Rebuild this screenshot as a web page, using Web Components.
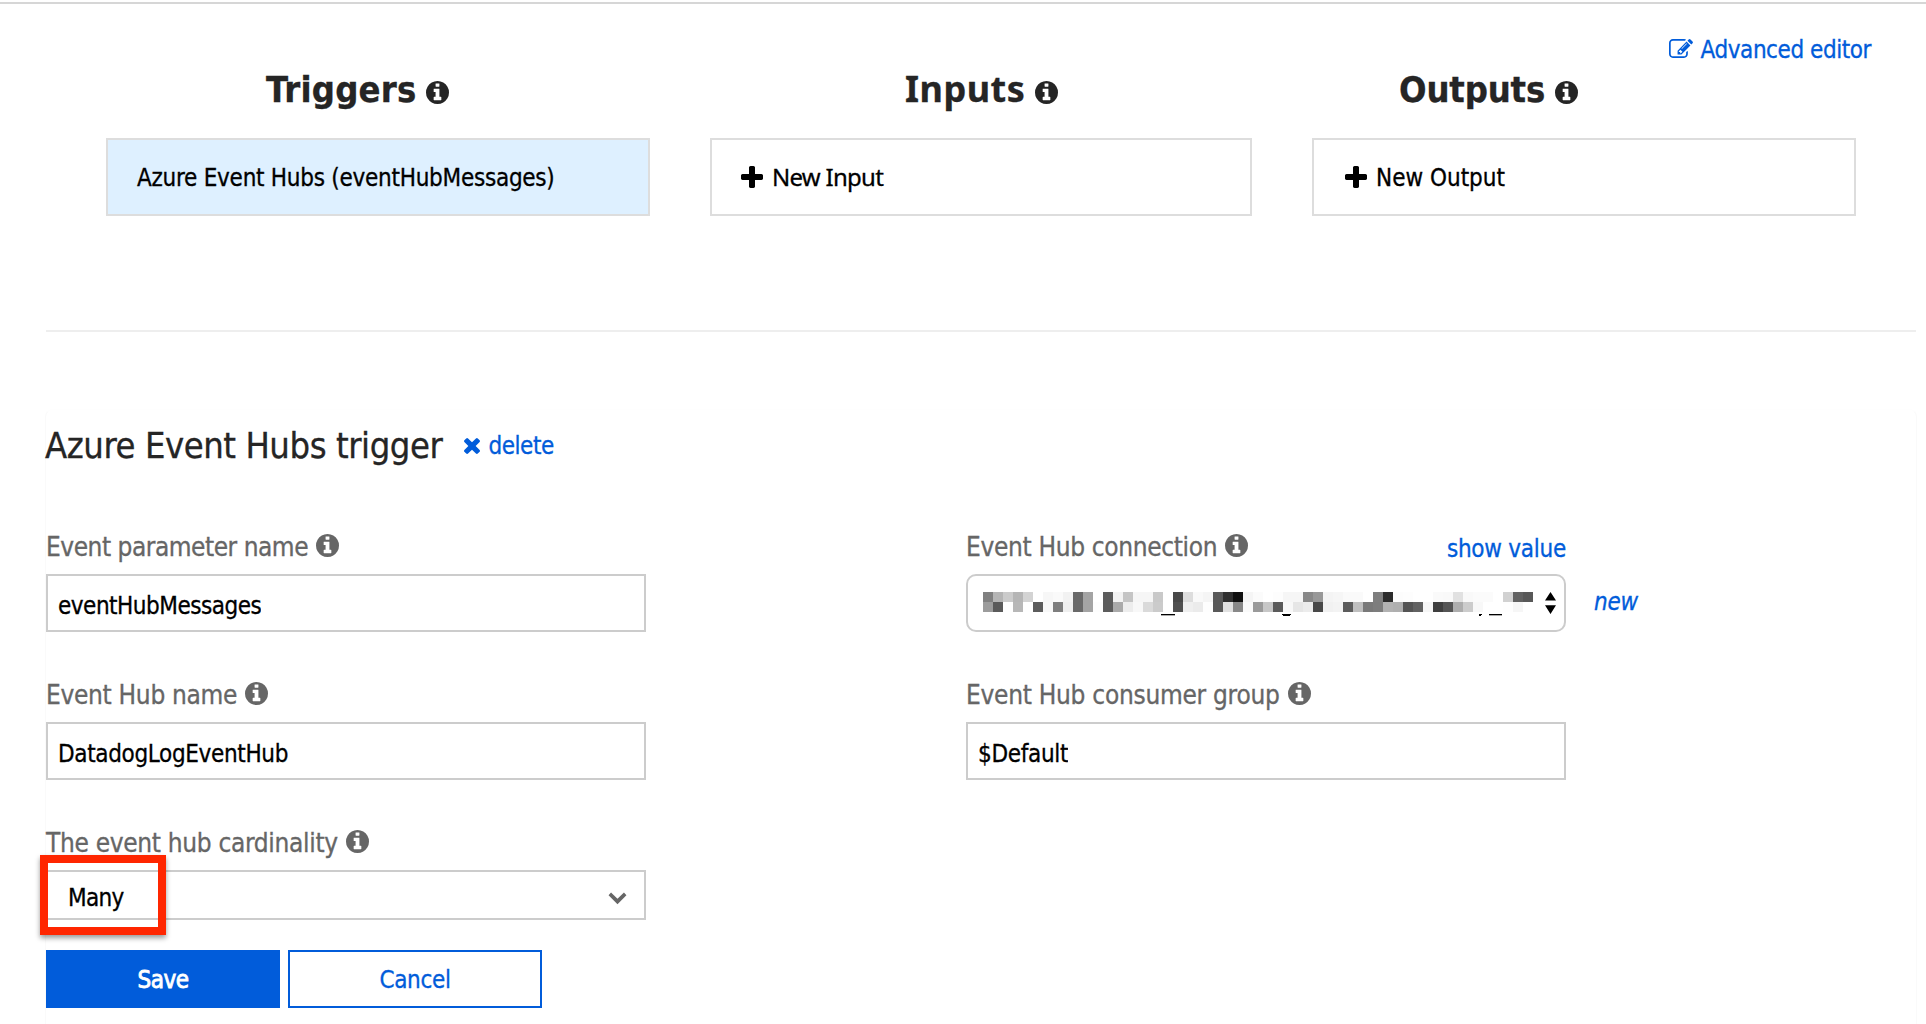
<!DOCTYPE html>
<html lang="en">
<head>
<meta charset="utf-8">
<title>Function integrations</title>
<style>
  html, body { margin: 0; height: 1024px; overflow: hidden; background: #fff; }
  body { font-family: "DejaVu Sans Condensed", "Noto Sans", sans-serif; color: #000; -webkit-text-stroke: .3px currentColor; }
</style>
</head>
<body>
<integrate-page></integrate-page>
<script>
const ICONS = {
  info: ['128 128 1536 1536', 'M1152 1376v-160q0-14-9-23t-23-9h-96v-512q0-14-9-23t-23-9h-320q-14 0-23 9t-9 23v160q0 14 9 23t23 9h96v320h-96q-14 0-23 9t-9 23v160q0 14 9 23t23 9h448q14 0 23-9t9-23zm-128-896v-160q0-14-9-23t-23-9h-192q-14 0-23 9t-9 23v160q0 14 9 23t23 9h192q14 0 23-9t9-23zm640 416q0 209-103 385.5t-279.5 279.5-385.5 103-385.5-103-279.5-279.5-103-385.5 103-385.5 279.5-279.5 385.5-103 385.5 103 279.5 279.5 103 385.5z'],
  plus: ['192 128 1408 1408', 'M1600 736v192q0 40-28 68t-68 28h-416v416q0 40-28 68t-68 28h-192q-40 0-68-28t-28-68v-416h-416q-40 0-68-28t-28-68v-192q0-40 28-68t68-28h416v-416q0-40 28-68t68-28h192q40 0 68 28t28 68v416h416q40 0 68 28t28 68z'],
  times: ['302 366 1188 1188', 'M1490 1322q0 40-28 68l-136 136q-28 28-68 28t-68-28l-294-294-294 294q-28 28-68 28t-68-28l-136-136q-28-28-28-68t28-68l294-294-294-294q-28-28-28-68t28-68l136-136q28-28 68-28t68 28l294 294 294-294q28-28 68-28t68 28l136 136q28 28 28 68t-28 68l-294 294 294 294q28 28 28 68z'],
  edit: ['0 128 1792 1408', 'M888 1184l116-116-152-152-116 116v56h96v96h56zm440-720q-16-16-33 1l-350 350q-17 17-1 33t33-1l350-350q17-17 1-33zm80 594v190q0 119-84.5 203.5t-203.5 84.5h-832q-119 0-203.5-84.5t-84.5-203.5v-832q0-119 84.5-203.5t203.5-84.5h832q63 0 117 25 15 7 18 23 3 17-9 29l-49 49q-14 14-32 8-23-6-45-6h-832q-66 0-113 47t-47 113v832q0 66 47 113t113 47h832q66 0 113-47t47-113v-126q0-13 9-22l64-64q15-15 35-7t20 29zm-96-738l288 288-672 672h-288v-288zm444 132l-92 92-288-288 92-92q28-28 68-28t68 28l152 152q28 28 28 68t-28 68z'],
  chevron: ['0 0 20 14', 'M0.6 3.4L3.2 0.6L10 7.4L16.8 0.6L19.4 3.4L10 13.2z'],
  updown: ['0 0 12 22', 'M6 0L12 8.6H0zM6 22L0 13.2H12z']
};
function define(name, html, init) {
  const t = document.createElement('template');
  t.innerHTML = html;
  customElements.define(name, class extends HTMLElement {
    constructor() {
      super();
      this.attachShadow({ mode: 'open' }).append(t.content.cloneNode(true));
    }
    connectedCallback() { if (init) init(this, this.shadowRoot); }
  });
}

define('ui-icon', `<style>:host{display:block;flex:none}svg{display:block;width:100%;height:100%;fill:currentColor}</style><svg preserveAspectRatio="none"><path/></svg>`, (el, r) => {
  const [vb, d] = ICONS[el.getAttribute('name')];
  r.querySelector('svg').setAttribute('viewBox', vb);
  r.querySelector('path').setAttribute('d', d);
});

define('binding-column', `<style>
  :host{display:flex;flex-direction:column;gap:26px}
  header{display:flex;align-items:center;gap:10px;height:44px;color:#252525;padding-left:var(--indent)}
  h2{margin:var(--lift,0) 0 0;font-size:36px;line-height:44px;font-weight:700;white-space:nowrap}
  ui-icon{width:23px;height:23px;margin-top:4px}
</style><header><h2><slot name="title"></slot></h2><ui-icon name="info"></ui-icon></header><slot></slot>`);

define('binding-card', `<style>
  :host{display:flex;align-items:center;gap:9px;box-sizing:border-box;height:78px;border:2px solid #ddd;padding-left:29px;font-size:24px;line-height:30px;white-space:nowrap;background:#fff}
  :host([selected]){background:#def0ff}
  div{padding-top:var(--drop,2px)}
</style><slot name="icon"></slot><div><slot></slot></div>`);

define('ui-link', `<style>
  :host{display:flex;align-items:center;gap:8px;color:#015cda;font-size:24px;line-height:30px;white-space:nowrap}
</style><slot name="icon"></slot><div><slot></slot></div>`);

define('form-field', `<style>
  :host{display:flex;flex-direction:column;gap:11px;width:600px}
  header{display:flex;justify-content:space-between;height:32px}
  .label{display:flex;align-items:center;gap:8px;color:#666;font-size:26px;line-height:32px;white-space:nowrap}
  ui-icon{width:23px;height:23px;margin-top:-3px}
</style><header><div class="label"><div><slot name="label"></slot></div><ui-icon name="info"></ui-icon></div><slot name="action"></slot></header><slot></slot>`);

define('text-box', `<style>
  :host{display:flex;align-items:center;box-sizing:border-box;height:58px;border:2px solid #ccc;padding:6px 10px 0 10px;font-size:24px;line-height:28px;white-space:nowrap;background:#fff}
  div{height:28px;overflow:hidden}
</style><div><slot></slot></div>`);

define('drop-down', `<style>
  :host{display:flex;align-items:center;justify-content:space-between;position:relative;box-sizing:border-box;height:50px;border:2px solid #ccc;padding:6px 17px 0 20px;font-size:24px;line-height:30px;background:#fff}
  ui-icon{width:19px;height:13px;color:#666}
  .mark{position:absolute;left:-8px;top:-17px;width:110px;height:64px;border:8px solid #ff2600;box-shadow:0 3px 5px rgba(0,0,0,.4)}
</style><div><slot></slot></div><ui-icon name="chevron"></ui-icon><span class="mark"></span>`);

define('connection-select', `<style>
  :host{display:flex;gap:12px;box-sizing:border-box;width:600px;height:58px;border:2px solid #ccc;border-radius:10px;padding:16px 0 0 15px;background:#fff}
  svg{display:block;flex:none}
  ui-icon{width:11px;height:22px}
</style><svg width="550" height="26" shape-rendering="crispEdges"></svg><ui-icon name="updown"></ui-icon>`, (el, r) => {
  const rows = [
    '80 b5 cb b5 d3 ff f7 fa f2 69 a4 ff 5c f3 c5 f6 f6 c9 ff 48 dd f9 f5 59 30 10 f5 fb ff fd f6 f6 88 98 f4 f6 fa fa ff 7e 2b fc fd ff ff fa f9 e1 f9 fb fb ff d1 62 58',
    '9c 5a fe b7 fe 5c f8 7e ef 69 a4 fd 5c aa ed f8 da cb ff 50 ef eb fe 59 e1 88 fa 9a c7 5a f8 e6 ec 48 f1 f3 5c bf 79 7d b2 af 54 62 f6 3e 54 ad cc f8 ff ff fe f6 ff'
  ];
  let s = '';
  rows.forEach((row, y) => row.split(' ').forEach((c, x) => {
    s += `<rect x="${x * 10}" y="${y * 10}" width="10" height="10" fill="#${c + c + c}"/>`;
  }));
  s += '<path d="M178 22h14v1h-14zM299 22h9v1h-1v1h-7v-1h-1zM496 22h3v1h-1v1h-2zM506 22h13v1h-13z"/><path fill="#aaa" d="M178 23h14v1h-14zM506 23h13v1h-13z"/>';
  r.querySelector('svg').innerHTML = s;
});

define('ui-button', `<style>
  :host{display:flex;align-items:center;justify-content:center;box-sizing:border-box;height:58px;border:2px solid #015cda;padding-top:2px;color:#015cda;background:#fff;font-size:24px;line-height:30px}
  :host([primary]){background:#015cda;color:#fff;-webkit-text-stroke:.8px #fff}
</style><div><slot></slot></div>`);

define('integrate-page', `<style>
  :host{display:flex;flex-direction:column;height:1024px;overflow:hidden}
  .top{flex:none;margin-top:2px;height:2px;background:#d6d6d6}
  .actions{flex:none;display:flex;justify-content:flex-end;padding:31px 55px 3px 0}
  .bindings{flex:none;display:grid;grid-template-columns:544px 542px 544px;column-gap:60px;padding-left:106px}
  hr{flex:none;width:1870px;height:2px;margin:114px 0 0 46px;border:0;background:#eee}
  .panel{flex:none;display:flex;flex-direction:column;box-sizing:border-box;width:1872px;height:640px;margin:77px 0 0 45px;border:1px solid #fafafa;border-top-color:#fefefe;border-radius:8px;padding-top:14px}
  .title{display:flex;align-items:center;gap:22px;height:44px;margin-bottom:63px}
  h1{margin:0 0 0 -1px;font-size:36px;line-height:44px;font-weight:400;color:#252525;white-space:nowrap;letter-spacing:-.42px}
  .fields{display:grid;grid-template-columns:600px 1fr;column-gap:320px;row-gap:47px}
  .with-link{display:flex;gap:28px}
  .buttons{display:flex;gap:8px;margin-top:30px}
  .plus{width:22px;height:22px}
</style>
<div class="top"></div>
<div class="actions"><ui-link style="letter-spacing:-.44px"><ui-icon slot="icon" name="edit" style="width:24px;height:19px;margin-top:-3px"></ui-icon>Advanced editor</ui-link></div>
<div class="bindings">
  <binding-column style="--indent:160px"><span slot="title" style="letter-spacing:.2px">Triggers</span>
    <binding-card selected style="letter-spacing:-.26px">Azure Event Hubs (eventHubMessages)</binding-card></binding-column>
  <binding-column style="--indent:195px;--lift:-2px"><span slot="title" style="font-family:'Noto Sans';letter-spacing:.5px">Inputs</span>
    <binding-card style="font-family:'Noto Sans';letter-spacing:-.72px;--drop:0px"><ui-icon class="plus" slot="icon" name="plus"></ui-icon>New Input</binding-card></binding-column>
  <binding-column style="--indent:87px"><span slot="title" style="letter-spacing:-.14px">Outputs</span>
    <binding-card style="padding-left:31px"><ui-icon class="plus" slot="icon" name="plus"></ui-icon>New Output</binding-card></binding-column>
</div>
<hr>
<div class="panel">
  <div class="title"><h1>Azure Event Hubs trigger</h1><ui-link style="letter-spacing:-.45px"><ui-icon slot="icon" name="times" style="width:16px;height:16px"></ui-icon>delete</ui-link></div>
  <div class="fields">
    <form-field><span slot="label" style="letter-spacing:-.48px">Event parameter name</span><text-box style="letter-spacing:-.48px">eventHubMessages</text-box></form-field>
    <form-field><span slot="label" style="letter-spacing:-.34px">Event Hub connection</span><ui-link slot="action" style="letter-spacing:-.26px;margin-top:4px">show value</ui-link>
      <div class="with-link"><connection-select style="flex:none"></connection-select><ui-link style="font-style:italic;letter-spacing:-.2px;margin-top:-3px">new</ui-link></div></form-field>
    <form-field><span slot="label" style="letter-spacing:-.31px">Event Hub name</span><text-box style="letter-spacing:-.34px">DatadogLogEventHub</text-box></form-field>
    <form-field><span slot="label" style="letter-spacing:-.28px">Event Hub consumer group</span><text-box style="letter-spacing:-.31px">$Default</text-box></form-field>
    <form-field><span slot="label" style="letter-spacing:-.32px">The event hub cardinality</span><drop-down style="letter-spacing:-.68px">Many</drop-down></form-field>
  </div>
  <div class="buttons"><ui-button primary style="width:234px;letter-spacing:-.44px">Save</ui-button><ui-button style="width:254px;letter-spacing:-.35px">Cancel</ui-button></div>
</div>`);
</script>
</body>
</html>
